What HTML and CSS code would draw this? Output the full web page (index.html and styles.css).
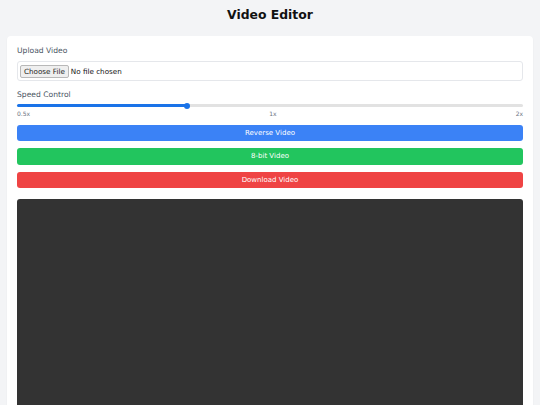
FILE: index.html
```
<!DOCTYPE html>
<html>
<head>
<meta charset="utf-8">
<link rel="stylesheet" href="styles.css">
</head>
<body>
<h1 class="title">Video Editor</h1>
<div class="card">
  <label class="label">Upload Video</label>
  <div class="file-box"><input class="file" type="file" accept="video/*"></div>
  <label class="label speed-label">Speed Control</label>
  <input class="range" type="range" min="0.5" max="2" step="0.1" value="1">
  <div class="ticks"><span>0.5x</span><span>1x</span><span>2x</span></div>
  <button class="btn blue">Reverse Video</button>
  <button class="btn green">8-bit Video</button>
  <button class="btn red">Download Video</button>
  <div class="video"></div>
</div>
</body>
</html>
```
FILE: styles.css
```
* { box-sizing: border-box; }
html, body { margin: 0; }
body {
  background: #f3f4f6;
  font-family: "DejaVu Sans", sans-serif;
  padding: 7px;
  color: #374151;
  overflow: hidden;
  height: 405px;
}
.title {
  margin: 0 0 13px;
  font-size: 12.4px;
  line-height: 16px;
  text-align: center;
  color: #111;
  font-weight: bold;
}
.card {
  background: #fff;
  border-radius: 4px;
  padding: 10px;
  box-shadow: 0 1px 2px rgba(0,0,0,0.06);
  display: flex;
  flex-direction: column;
}
.label {
  display: block;
  font-size: 7.6px;
  line-height: 10px;
  color: #4b5563;
  margin-bottom: 5px;
}
.speed-label { margin-top: 8.5px; margin-bottom: 2px; }
.file-box {
  height: 20px;
  border: 1px solid #e5e7eb;
  border-radius: 3px;
  padding: 2px;
  display: flex;
  align-items: center;
}
.file {
  font-family: "DejaVu Sans", sans-serif;
  font-size: 7.2px;
  color: #111;
}
.file::file-selector-button {
  font-family: "DejaVu Sans", sans-serif;
  font-size: 7.2px;
  height: 13px;
  padding: 0 3px;
  margin-right: 2px;
  background: #efefef;
  border: 1px solid #b8b8b8;
  border-radius: 2px;
  color: #222;
}
.range {
  -webkit-appearance: none;
  appearance: none;
  width: 100%;
  height: 8px;
  margin: 0;
  background: transparent;
}
.range::-webkit-slider-runnable-track {
  height: 3px;
  border-radius: 2px;
  background: linear-gradient(to right, #1a73e8 0%, #1a73e8 33.4%, #e2e2e2 33.4%, #e2e2e2 100%);
}
.range::-webkit-slider-thumb {
  -webkit-appearance: none;
  width: 6px;
  height: 6px;
  margin-top: -1.5px;
  border-radius: 50%;
  background: #1a73e8;
  border: none;
}
.ticks {
  display: flex;
  justify-content: space-between;
  font-size: 6px;
  line-height: 8px;
  color: #6b7280;
  margin-top: 0;
  margin-bottom: 7px;
}
.btn {
  display: block;
  width: 100%;
  height: 16.5px;
  border: none;
  border-radius: 3px;
  color: #fff;
  font-family: "DejaVu Sans", sans-serif;
  font-size: 7px;
  margin-bottom: 7px;
  padding: 0;
}
.btn.red { margin-bottom: 10.5px; }
.blue { background: #3b82f6; }
.green { background: #22c55e; }
.red { background: #ef4444; }
.video {
  height: 285px;
  background: #333;
  border-radius: 3px;
}
```
